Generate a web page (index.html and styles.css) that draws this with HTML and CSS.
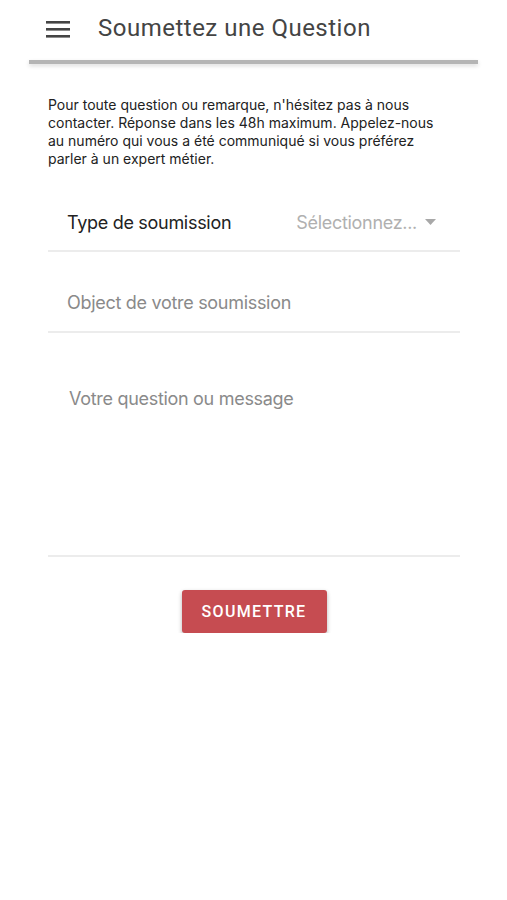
FILE: index.html
```html
<!DOCTYPE html>
<html lang="fr">
<head>
    <meta charset="UTF-8">
    <meta name="viewport" content="width=device-width, initial-scale=1.0">
    <title>Soumettez une Question</title>
    <link rel="stylesheet" href="styles.css">
</head>
<body>
    <div class="header">
        <button class="menu-button" aria-label="Menu">
            <svg width="24" height="18" viewBox="0 0 24 18">
                <rect x="0" y="1" width="24" height="2.6" fill="#444"/>
                <rect x="0" y="8" width="24" height="2.6" fill="#444"/>
                <rect x="0" y="15" width="24" height="2.6" fill="#444"/>
            </svg>
        </button>
        <h1>Soumettez une Question</h1>
    </div>
    <div class="header-line"></div>

    <div class="container">
        <p class="intro">Pour toute question ou remarque, n'hésitez pas à nous contacter. Réponse dans les 48h maximum. Appelez-nous au numéro qui vous a été communiqué si vous préférez parler à un expert métier.</p>

        <form id="questionForm">
            <div class="form-row select-row">
                <div class="form-label">Type de soumission</div>
                <div class="select-value">
                    <span>Sélectionnez...</span>
                    <svg width="11" height="6" viewBox="0 0 11 6"><path d="M0 0 L11 0 L5.5 6 Z" fill="#a8a8a8"/></svg>
                </div>
            </div>

            <div class="form-row input-row">
                <input type="text" name="object" placeholder="Object de votre soumission">
            </div>

            <div class="form-row textarea-row">
                <textarea name="message" placeholder="Votre question ou message"></textarea>
            </div>

            <div class="button-container">
                <button type="submit" class="submit-button">Soumettre</button>
            </div>
        </form>
    </div>
</body>
</html>
```

FILE: styles.css
```css
body {
    font-family: Inter, Roboto, 'Helvetica Neue', sans-serif;
    margin: 0;
    padding: 0;
    background-color: #fff;
    color: #222;
}
.header {
    display: flex;
    align-items: center;
    height: 56px;
    padding-left: 46px;
}
.menu-button {
    background: none;
    border: none;
    padding: 0;
    margin: 2px 28px 0 0;
    display: flex;
    cursor: pointer;
}
.header h1 {
    font-family: Roboto, sans-serif;
    font-size: 24px;
    font-weight: 400;
    color: #444;
    margin: 0;
    letter-spacing: 0.5px;
}
.header-line {
    margin: 4px 29px 0 29px;
    height: 4px;
    background-color: #b4b4b4;
    box-shadow: 0 2px 4px rgba(0, 0, 0, 0.15);
}
.container {
    padding: 0 47px 0 48px;
}
.intro {
    font-size: 14px;
    line-height: 18px;
    margin: 32px 17px 0 0;
    color: #222;
}
.form-row {
    box-sizing: border-box;
    border-bottom: 2px solid #ececec;
}
.select-row {
    display: flex;
    align-items: center;
    justify-content: space-between;
    height: 84px;
    padding: 26px 24px 0 19px;
}
.form-label {
    font-size: 18px;
    color: #222;
    letter-spacing: -0.3px;
}
.select-value {
    display: flex;
    align-items: center;
    gap: 8px;
    font-size: 18px;
    color: #b0b0b0;
    letter-spacing: -0.3px;
}
input[type="text"], textarea {
    width: 100%;
    box-sizing: border-box;
    border: none;
    outline: none;
    background: transparent;
    font-family: Inter, Roboto, sans-serif;
    font-size: 18px;
    color: #222;
    letter-spacing: -0.3px;
}
input::placeholder, textarea::placeholder {
    color: #8a8a8a;
}
.input-row input {
    display: block;
    height: 79px;
    padding: 21px 0 0 19px;
}
.textarea-row textarea {
    display: block;
    height: 222px;
    resize: none;
    padding: 55px 0 0 21px;
}
.button-container {
    text-align: center;
    padding-top: 33px;
}
.submit-button {
    background-color: #c64c51;
    color: #fff;
    border: none;
    width: 145px;
    height: 43px;
    font-family: Roboto, sans-serif;
    font-size: 16px;
    font-weight: 500;
    letter-spacing: 1.3px;
    text-transform: uppercase;
    border-radius: 3px;
    box-shadow: 0 2px 4px rgba(0, 0, 0, 0.3);
    cursor: pointer;
}
```
